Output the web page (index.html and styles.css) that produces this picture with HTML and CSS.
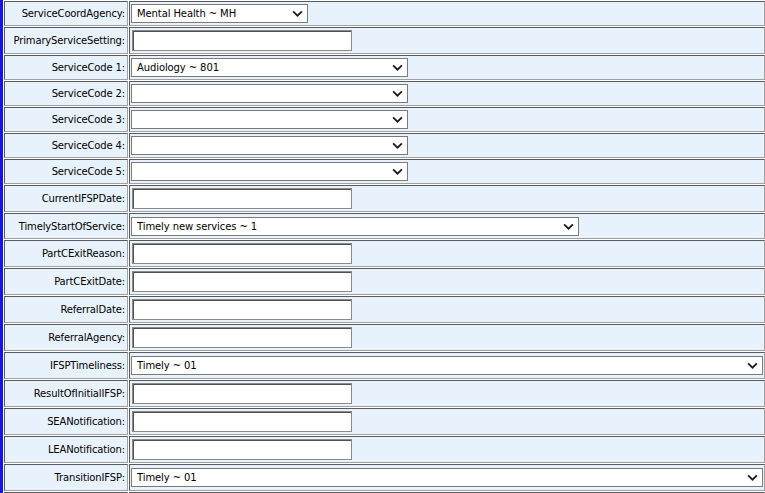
FILE: index.html
```html
<!DOCTYPE html>
<html>
<head>
<meta charset="utf-8">
<link rel="stylesheet" href="styles.css">
</head>
<body>
<div class="frame">
<table class="form">
<tr class="sel"><td class="lbl">ServiceCoordAgency:</td><td class="val"><span class="dd w176"><select><option>Mental Health ~ MH</option></select><svg class="chev" viewBox="0 0 10 6"><path d="M1 1 L5 5 L9 1"/></svg></span></td></tr>
<tr class="inp"><td class="lbl">PrimaryServiceSetting:</td><td class="val"><input type="text"></td></tr>
<tr class="sel"><td class="lbl">ServiceCode 1:</td><td class="val"><span class="dd w276"><select><option>Audiology ~ 801</option></select><svg class="chev" viewBox="0 0 10 6"><path d="M1 1 L5 5 L9 1"/></svg></span></td></tr>
<tr class="sel"><td class="lbl">ServiceCode 2:</td><td class="val"><span class="dd w276"><select><option></option></select><svg class="chev" viewBox="0 0 10 6"><path d="M1 1 L5 5 L9 1"/></svg></span></td></tr>
<tr class="sel"><td class="lbl">ServiceCode 3:</td><td class="val"><span class="dd w276"><select><option></option></select><svg class="chev" viewBox="0 0 10 6"><path d="M1 1 L5 5 L9 1"/></svg></span></td></tr>
<tr class="sel"><td class="lbl">ServiceCode 4:</td><td class="val"><span class="dd w276"><select><option></option></select><svg class="chev" viewBox="0 0 10 6"><path d="M1 1 L5 5 L9 1"/></svg></span></td></tr>
<tr class="sel"><td class="lbl">ServiceCode 5:</td><td class="val"><span class="dd w276"><select><option></option></select><svg class="chev" viewBox="0 0 10 6"><path d="M1 1 L5 5 L9 1"/></svg></span></td></tr>
<tr class="inp"><td class="lbl">CurrentIFSPDate:</td><td class="val"><input type="text"></td></tr>
<tr class="sel mid"><td class="lbl">TimelyStartOfService:</td><td class="val"><span class="dd w448"><select><option>Timely new services ~ 1</option></select><svg class="chev" viewBox="0 0 10 6"><path d="M1 1 L5 5 L9 1"/></svg></span></td></tr>
<tr class="inp"><td class="lbl">PartCExitReason:</td><td class="val"><input type="text"></td></tr>
<tr class="inp"><td class="lbl">PartCExitDate:</td><td class="val"><input type="text"></td></tr>
<tr class="inp"><td class="lbl">ReferralDate:</td><td class="val"><input type="text"></td></tr>
<tr class="inp"><td class="lbl">ReferralAgency:</td><td class="val"><input type="text"></td></tr>
<tr class="sel tall"><td class="lbl">IFSPTimeliness:</td><td class="val"><span class="dd wfull"><select><option>Timely ~ 01</option></select><svg class="chev" viewBox="0 0 10 6"><path d="M1 1 L5 5 L9 1"/></svg></span></td></tr>
<tr class="inp"><td class="lbl">ResultOfInitialIFSP:</td><td class="val"><input type="text"></td></tr>
<tr class="inp"><td class="lbl">SEANotification:</td><td class="val"><input type="text"></td></tr>
<tr class="inp"><td class="lbl">LEANotification:</td><td class="val"><input type="text"></td></tr>
<tr class="sel tall"><td class="lbl">TransitionIFSP:</td><td class="val"><span class="dd wfull"><select><option>Timely ~ 01</option></select><svg class="chev" viewBox="0 0 10 6"><path d="M1 1 L5 5 L9 1"/></svg></span></td></tr>
<tr class="inp"><td class="lbl">&nbsp;</td><td class="val"><input type="text"></td></tr>
</table>
</div>
</body>
</html>
```
FILE: styles.css
```css
html, body {
  margin: 0;
  padding: 0;
  background: #ffffff;
  overflow: hidden;
}
.frame {
  border-left: 3px solid #1414f0;
  min-height: 493px;
}
.form {
  width: calc(100% + 1px);
  border-collapse: separate;
  border-spacing: 1px;
  font-family: "DejaVu Sans", Verdana, sans-serif;
  font-size: 10px;
  color: #000;
}
.form td {
  background: #e8f2fd;
  border-style: solid;
  border-width: 1px;
  border-color: #5a5a5a #a0a0a0 #a0a0a0 #5a5a5a;
  padding: 2px 1px;
  vertical-align: middle;
}
.form td.lbl {
  width: 119px;
  text-align: right;
  white-space: nowrap;
  padding-right: 2px;
  letter-spacing: -0.15px;
}
.form tr.sel td { height: 19px; }
.form tr.sel.mid td { height: 20px; }
.form tr.sel.tall td { height: 21px; }
.form tr.inp td { height: 21px; }
.val input {
  display: block;
  box-sizing: border-box;
  width: 220px;
  height: 21px;
  margin: 0 0 0 1px;
  border: 1px solid #8a8a8a;
  box-shadow: inset 1px 1px 0 #505050;
  background: #fff;
  padding: 0;
}
.dd {
  position: relative;
  display: block;
  height: 19px;
}
.dd select {
  -webkit-appearance: none;
  appearance: none;
  display: block;
  box-sizing: border-box;
  width: 100%;
  height: 19px;
  margin: 0;
  border: 1px solid #7a7a7a;
  border-radius: 0;
  background: #fff;
  font-family: "DejaVu Sans", Verdana, sans-serif;
  font-size: 10px;
  letter-spacing: -0.1px;
  color: #000;
  padding: 0 0 0 5px;
  outline: none;
}
.w176 { width: 177px; }
.w276 { width: 277px; }
.w448 { width: 448px; }
.wfull { width: 100%; }
.chev {
  position: absolute;
  right: 5px;
  top: 6px;
  width: 11px;
  height: 7px;
  fill: none;
  stroke: #1a1a1a;
  stroke-width: 1.6;
}
```
